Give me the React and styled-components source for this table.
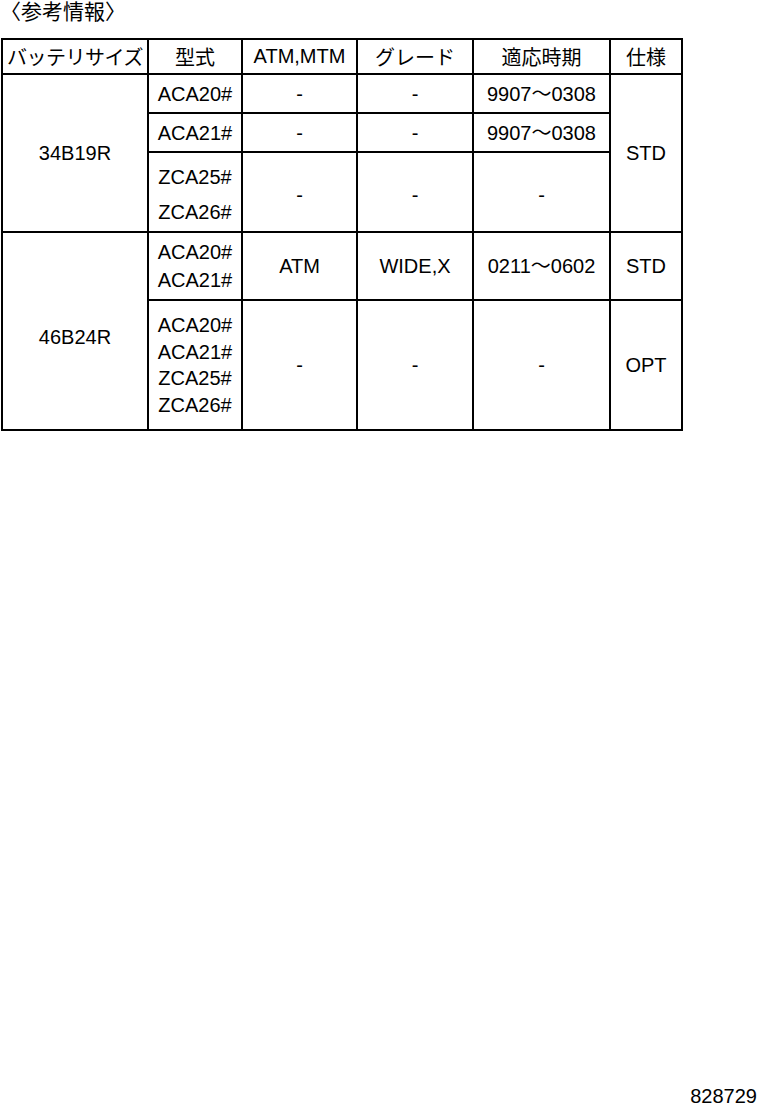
import styled, { createGlobalStyle } from "styled-components";

const GlobalStyle = createGlobalStyle`
  html, body {
    margin: 0;
    padding: 0;
    background: #fff;
  }
  body {
    font-family: "Liberation Sans", "Noto Sans CJK JP", sans-serif;
    color: #000;
  }
`;

const Page = styled.div`
  min-height: 1112px;
  display: flex;
  flex-direction: column;
`;

const Title = styled.div`
  font-size: 21px;
  line-height: 24px;
  height: 24px;
  margin-bottom: 14px;
`;

const Table = styled.table`
  border-collapse: collapse;
  table-layout: fixed;
  width: 680px;
  margin-left: 1px;
  font-size: 20px;
`;

const HeadCell = styled.th`
  font-weight: normal;
  border: 2px solid #000;
  padding: 0;
  text-align: center;
  vertical-align: middle;
  white-space: nowrap;
  letter-spacing: ${(p) => p.$tight || "0"};
`;

const Row = styled.tr`
  height: ${(p) => p.$h}px;
`;

const Cell = styled.td`
  border: 2px solid #000;
  padding: 0;
  text-align: center;
  vertical-align: middle;
  white-space: nowrap;
  line-height: ${(p) => p.$lh || 24}px;
  padding-top: ${(p) => p.$pt || 0}px;
`;

const Footer = styled.div`
  margin-top: auto;
  align-self: flex-end;
  font-size: 20px;
  line-height: 24px;
  padding: 0 3px 4px 0;
`;

const Lines = ({ items }) =>
  items.map((t, i) => (
    <span key={i}>
      {t}
      {i < items.length - 1 && <br />}
    </span>
  ));

export default function App() {
  return (
    <Page>
      <GlobalStyle />
      <Title>〈参考情報〉</Title>
      <Table>
        <colgroup>
          <col style={{ width: 146 }} />
          <col style={{ width: 94 }} />
          <col style={{ width: 115 }} />
          <col style={{ width: 116 }} />
          <col style={{ width: 137 }} />
          <col style={{ width: 72 }} />
        </colgroup>
        <thead>
          <Row $h={35}>
            <HeadCell $tight="-0.5px">バッテリサイズ</HeadCell>
            <HeadCell>型式</HeadCell>
            <HeadCell>ATM,MTM</HeadCell>
            <HeadCell>グレード</HeadCell>
            <HeadCell>適応時期</HeadCell>
            <HeadCell>仕様</HeadCell>
          </Row>
        </thead>
        <tbody>
          <Row $h={39}>
            <Cell rowSpan={3}>34B19R</Cell>
            <Cell>ACA20#</Cell>
            <Cell>-</Cell>
            <Cell>-</Cell>
            <Cell>9907～0308</Cell>
            <Cell rowSpan={3}>STD</Cell>
          </Row>
          <Row $h={39}>
            <Cell>ACA21#</Cell>
            <Cell>-</Cell>
            <Cell>-</Cell>
            <Cell>9907～0308</Cell>
          </Row>
          <Row $h={80}>
            <Cell $lh={35} $pt={6}>
              <Lines items={["ZCA25#", "ZCA26#"]} />
            </Cell>
            <Cell $pt={6}>-</Cell>
            <Cell $pt={6}>-</Cell>
            <Cell $pt={6}>-</Cell>
          </Row>
          <Row $h={68}>
            <Cell rowSpan={2} $pt={12}>46B24R</Cell>
            <Cell $lh={28}>
              <Lines items={["ACA20#", "ACA21#"]} />
            </Cell>
            <Cell>ATM</Cell>
            <Cell>WIDE,X</Cell>
            <Cell>0211～0602</Cell>
            <Cell>STD</Cell>
          </Row>
          <Row $h={130}>
            <Cell $lh={26.5}>
              <Lines items={["ACA20#", "ACA21#", "ZCA25#", "ZCA26#"]} />
            </Cell>
            <Cell>-</Cell>
            <Cell>-</Cell>
            <Cell>-</Cell>
            <Cell>OPT</Cell>
          </Row>
        </tbody>
      </Table>
      <Footer>828729</Footer>
    </Page>
  );
}
